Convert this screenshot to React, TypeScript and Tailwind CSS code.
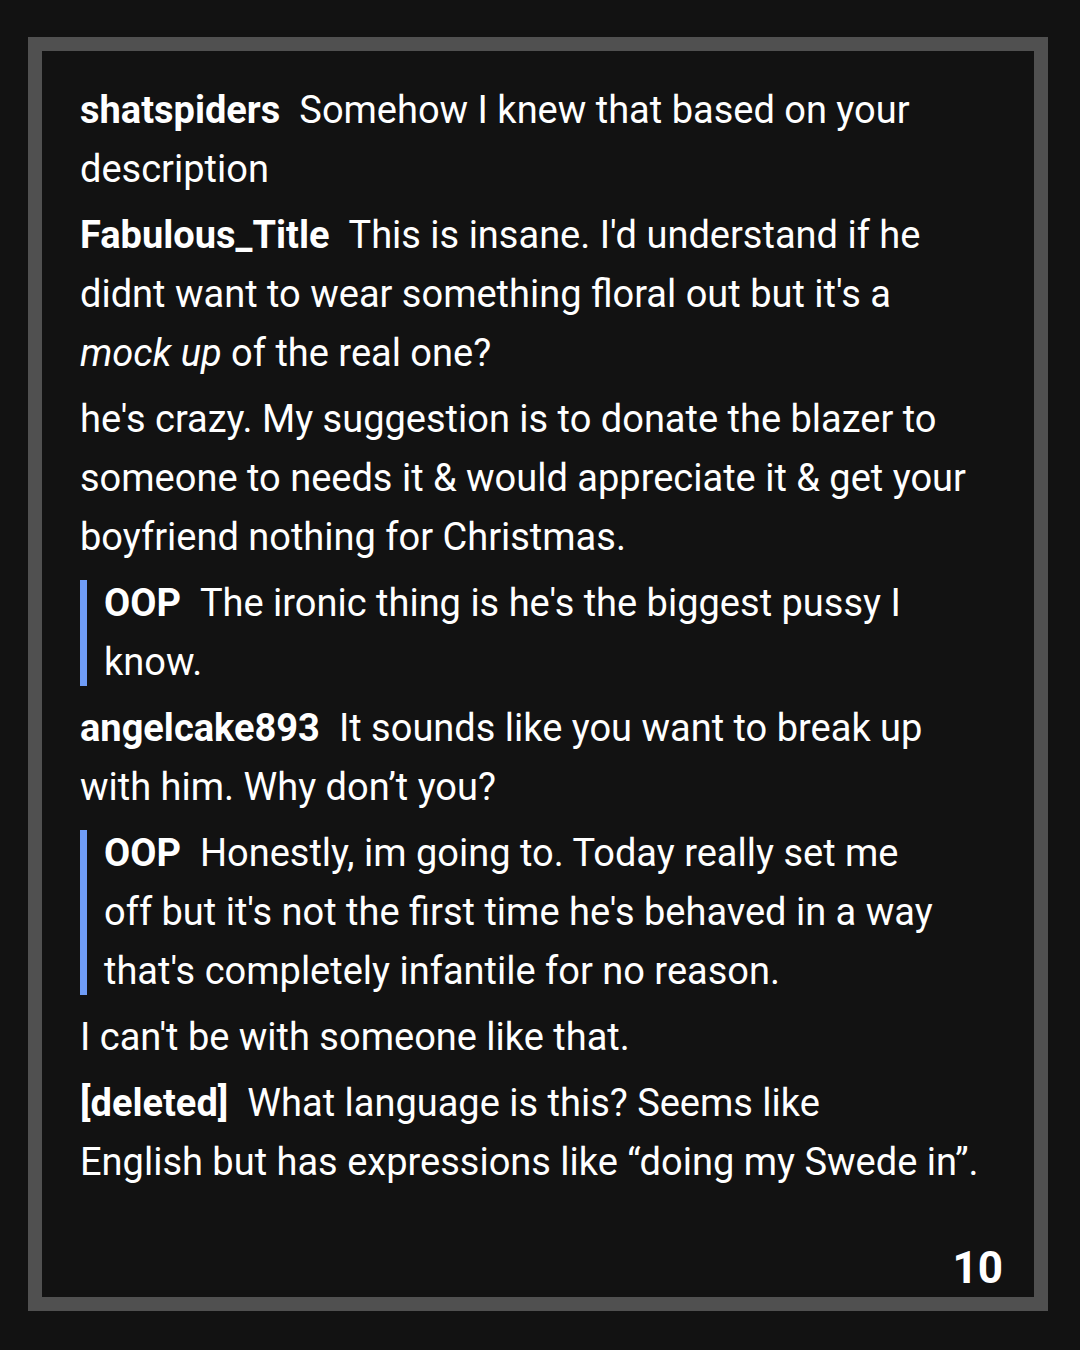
import React from 'react';

type Part = { text: string; italic?: boolean; br?: boolean };

const Comment: React.FC<{ user?: string; parts: Part[] }> = ({ user, parts }) => (
  <p className="mb-[7px]">
    {user && <span className="font-bold mr-[19px]">{user}</span>}
    {parts.map((p, i) =>
      p.br ? (
        <br key={i} />
      ) : p.italic ? (
        <em key={i} className="italic">
          {p.text}
        </em>
      ) : (
        <span key={i}>{p.text}</span>
      )
    )}
  </p>
);

const Quote: React.FC<{ user: string; text: string }> = ({ user, text }) => (
  <div className="flex mb-[7px]">
    <div className="w-[7px] shrink-0 bg-[#6f9cf6] my-[6px]" />
    <p className="pl-[17px] w-[853px]">
      <span className="font-bold mr-[19px]">{user}</span>
      {text}
    </p>
  </div>
);

export default function App() {
  return (
    <div className="w-[1080px] h-[1350px] bg-[#121212] pt-[37px] pl-[28px]">
      <div
        className="w-[1020px] h-[1274px] border-[14px] border-[#505050] flex flex-col text-white pt-[30px] pl-[38px] pr-[31px]"
        style={{ fontFamily: 'Roboto, "Noto Sans", sans-serif' }}
      >
        <div className="w-[900px] text-[38px] leading-[59px]">
          <Comment user="shatspiders" parts={[{ text: 'Somehow I knew that based on your description' }]} />
          <Comment
            user="Fabulous_Title"
            parts={[
              { text: "This is insane. I'd understand if he didnt want to wear something floral out but it's a " },
              { text: 'mock up', italic: true },
              { text: ' of the real one?' },
            ]}
          />
          <Comment
            parts={[
              {
                text: "he's crazy. My suggestion is to donate the blazer to someone to needs it & would appreciate it & get your boyfriend nothing for Christmas.",
              },
            ]}
          />
          <Quote user="OOP" text="The ironic thing is he's the biggest pussy I know." />
          <Comment user="angelcake893" parts={[{ text: 'It sounds like you want to break up with him. Why don\u2019t you?' }]} />
          <Quote
            user="OOP"
            text="Honestly, im going to. Today really set me off but it's not the first time he's behaved in a way that's completely infantile for no reason."
          />
          <Comment parts={[{ text: "I can't be with someone like that." }]} />
          <Comment
            user="[deleted]"
            parts={[
              { text: 'What language is this? Seems like' },
              { text: '', br: true },
              { text: 'English but has expressions like \u201cdoing my Swede in\u201d.' },
            ]}
          />
        </div>
        <div className="mt-auto mb-[3px] self-end text-[44px] font-bold leading-[52px]">10</div>
      </div>
    </div>
  );
}
